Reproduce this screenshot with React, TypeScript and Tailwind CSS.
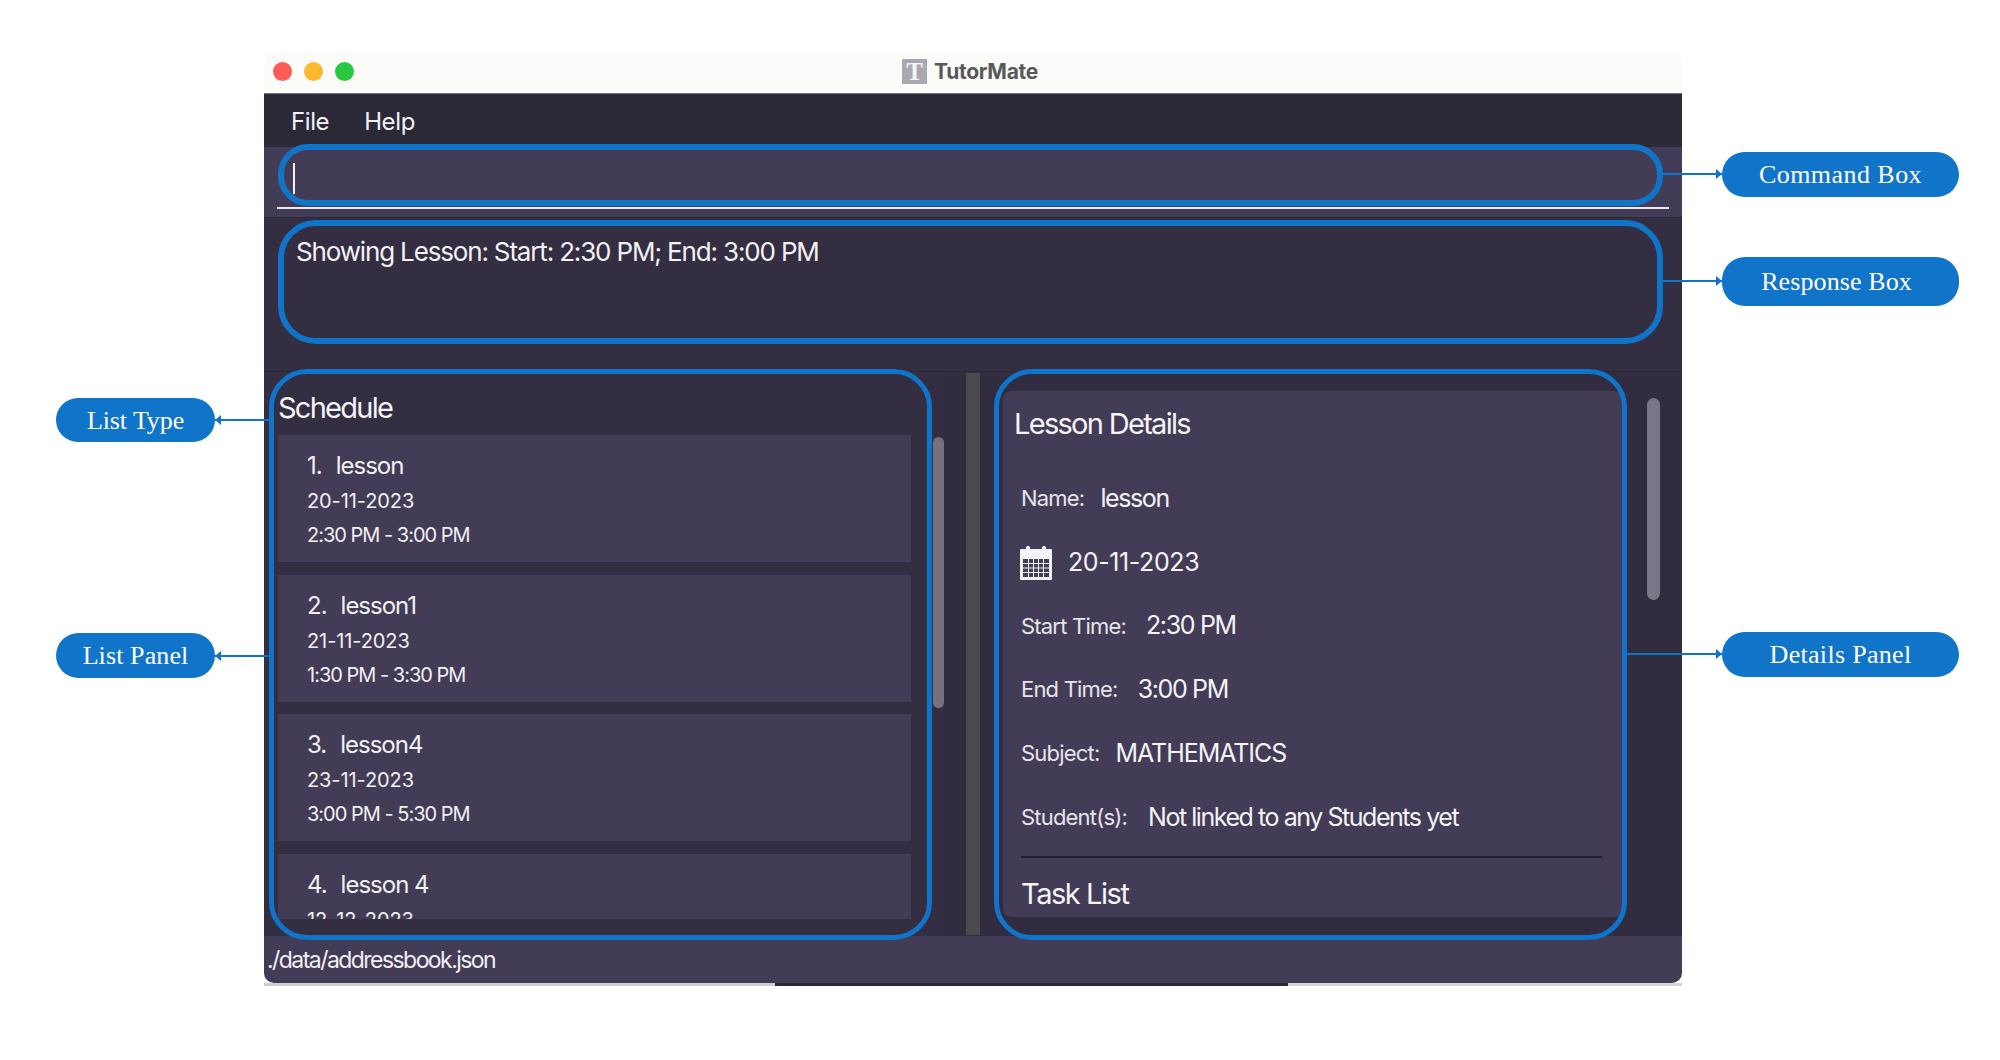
const lessons = [
  { n: "1.", name: "lesson", date: "20-11-2023", time: "2:30 PM - 3:00 PM" },
  { n: "2.", name: "lesson1", date: "21-11-2023", time: "1:30 PM - 3:30 PM" },
  { n: "3.", name: "lesson4", date: "23-11-2023", time: "3:00 PM - 5:30 PM" },
];

function Card({ n, name, date, time }: { n: string; name: string; date: string; time: string }) {
  return (
    <div className="h-[127px] shrink-0 bg-[#433c56] pl-[29px] pt-[13px] text-[#f1f0f3]">
      <div className="flex h-[36px] items-center gap-[14px] text-[24px] tracking-[-1px]">
        <span>{n}</span>
        <span>{name}</span>
      </div>
      <div className="h-[34px] text-[20px] leading-[34px] tracking-[-0.1px]">{date}</div>
      <div className="h-[34px] text-[20px] leading-[34px] tracking-[-1px]">{time}</div>
    </div>
  );
}

function Row({ label, value, gap, track }: { label: string; value: string; gap: string; track: string }) {
  return (
    <div className={`flex h-[63.7px] items-center ${gap}`}>
      <span className="text-[22px] tracking-[-0.8px] text-[#e6e4ea]">{label}</span>
      <span className={`text-[25px] text-[#f4f3f6] ${track}`}>{value}</span>
    </div>
  );
}

function CalendarIcon() {
  return (
    <svg width="32" height="34" viewBox="0 0 32 34" fill="none" className="-ml-[1px]">
      <rect x="0" y="3" width="32" height="31" rx="1" fill="#f3f2f5" />
      <rect x="6" y="0" width="4" height="6" rx="1.5" fill="#f3f2f5" />
      <rect x="22" y="0" width="4" height="6" rx="1.5" fill="#f3f2f5" />
      <g fill="#433c56">
        <rect x="3" y="13" width="26" height="18" />
      </g>
      <g fill="#f3f2f5">
        <rect x="8" y="13" width="1" height="18" />
        <rect x="13" y="13" width="1" height="18" />
        <rect x="18" y="13" width="1" height="18" />
        <rect x="23" y="13" width="1" height="18" />
        <rect x="3" y="17" width="26" height="1" />
        <rect x="3" y="21.5" width="26" height="1" />
        <rect x="3" y="26" width="26" height="1" />
      </g>
    </svg>
  );
}

function Arrow({ className, left }: { className: string; left?: boolean }) {
  return (
    <div className={`absolute h-[2px] bg-[#1074c9] ${className}`}>
      <div
        className={
          left
            ? "absolute left-0 top-[-4px] h-0 w-0 border-y-[5px] border-r-[6px] border-y-transparent border-r-[#1074c9]"
            : "absolute right-0 top-[-4px] h-0 w-0 border-y-[5px] border-l-[6px] border-y-transparent border-l-[#1074c9]"
        }
      />
    </div>
  );
}

function Callout({ className, children }: { className: string; children: string }) {
  return (
    <div
      className={`absolute flex items-center justify-center rounded-[23px] bg-[#1074c9] font-['Liberation_Serif',serif] text-[26px] text-white ${className}`}
    >
      {children}
    </div>
  );
}

export default function App() {
  return (
    <div className="relative h-[1060px] w-[2000px] overflow-hidden bg-white pl-[264px] pt-[52px] font-['Inter',sans-serif]">
      <div className="w-[1418px]">
        <div className="overflow-hidden rounded-b-[10px] rounded-t-[10px]">
          {/* Title bar */}
          <div className="relative flex h-[42px] items-center justify-center border-b border-b-[#77757a] bg-[#fbfcf9] pb-[2px]">
            <div className="absolute left-[9px] top-[10px] flex gap-[12px]">
              <div className="h-[19px] w-[19px] rounded-full bg-[#fc5b57]" />
              <div className="h-[19px] w-[19px] rounded-full bg-[#fdb92e]" />
              <div className="h-[19px] w-[19px] rounded-full bg-[#28c940]" />
            </div>
            <div className="flex items-center gap-[7px] pr-[6px]">
              <div className="flex h-[25px] w-[25px] items-center justify-center bg-[#a9a8af] font-['Liberation_Serif',serif] text-[25px] font-bold leading-none text-[#f4f4f6]">
                T
              </div>
              <span className="text-[21px] font-bold tracking-[-0.3px] text-[#58585a]">TutorMate</span>
            </div>
          </div>

          {/* Menu */}
          <div className="flex h-[53px] items-center gap-[35px] bg-[#2b2838] pl-[27px] pt-[3px] text-[24px] tracking-[-0.4px] text-[#f3f2f5]">
            <span>File</span>
            <span>Help</span>
          </div>

          {/* Command box */}
          <div className="h-[70px] bg-[#433c56] pl-[12.5px] pr-[13px]">
            <div className="flex h-[62px] items-end border-b-2 border-b-[#ece9ee] pb-[13px] pl-[16px]">
              <div className="h-[31px] w-[2px] bg-[#f0eff2]" />
            </div>
          </div>

          {/* Response */}
          <div className="h-[155px] border-y border-y-[#2b2838] bg-[#332e42] pl-[32px] pt-[15.5px] text-[26px] leading-[36px] tracking-[-1.16px] text-[#f3f2f5]">
            Showing Lesson: Start: 2:30 PM; End: 3:00 PM
          </div>

          {/* Panels */}
          <div className="flex h-[564px] bg-[#312c40]">
            <div className="flex w-[680px] shrink-0 bg-[#332e42] pl-[14px]">
              <div className="w-[633px] shrink-0">
                <div className="flex h-[63px] items-end pb-[7px] text-[29px] leading-[40px] tracking-[-1.75px] text-[#f5f4f7]">
                  Schedule
                </div>
                <div className="flex h-[484px] flex-col gap-[12.7px] overflow-hidden">
                  {lessons.map((l) => (
                    <Card key={l.n} {...l} />
                  ))}
                  <Card n="4." name="lesson 4" date="12-12-2023" time="" />
                </div>
              </div>
              <div className="ml-[22px] mt-[65px] h-[271px] w-[11px] rounded-full bg-[#75717f]" />
            </div>
            <div className="ml-[22px] mt-[1px] h-[562px] w-[14px] bg-[#4a4a4c]" />
            <div className="ml-[23px] mt-[19px] h-[526px] w-[619px] shrink-0 rounded-[8px] bg-[#433c56] px-[18px]">
              <div className="-ml-[7px] flex h-[66px] items-center text-[29px] tracking-[-1.7px] text-[#f5f4f7]">
                Lesson Details
              </div>
              <div className="mt-[10px]">
                <Row label="Name:" value="lesson" gap="gap-[16px]" track="tracking-[-1.4px]" />
                <div className="flex h-[63.7px] items-center gap-[16px]">
                  <CalendarIcon />
                  <span className="text-[25px] tracking-[-0.4px] text-[#f4f3f6]">20-11-2023</span>
                </div>
                <Row label="Start Time:" value="2:30 PM" gap="gap-[20px]" track="tracking-[-1.35px]" />
                <Row label="End Time:" value="3:00 PM" gap="gap-[20px]" track="tracking-[-1.35px]" />
                <Row label="Subject:" value="MATHEMATICS" gap="gap-[16px]" track="tracking-[-1.05px]" />
                <Row label="Student(s):" value="Not linked to any Students yet" gap="gap-[21px]" track="tracking-[-1.45px]" />
              </div>
              <div className="mt-[7px] h-[2px] w-[581px] bg-[#231f33]" />
              <div className="pt-[16px] text-[29px] leading-[40px] tracking-[-1.45px] text-[#f5f4f7]">Task List</div>
            </div>
            <div className="ml-[25px] mt-[26px] h-[202px] w-[13px] rounded-full bg-[#7a7686]" />
          </div>

          {/* Status */}
          <div className="h-[47px] bg-[#433c56] pl-[3px] pt-[7px] text-[23px] leading-[34px] tracking-[-1.55px] text-[#f1f0f3]">
            ./data/addressbook.json
          </div>
        </div>
        <div className="flex h-[3px]">
          <div className="w-[511px] bg-[#cfcfd1]" />
          <div className="w-[513px] bg-[#2b2838]" />
          <div className="flex-1 bg-[#d6d6d8]" />
        </div>
      </div>

      {/* Annotation rings */}
      <div className="pointer-events-none absolute left-[278px] top-[144px] h-[62px] w-[1385px] rounded-[30px] border-[6px] border-[#1074c9]" />
      <div className="pointer-events-none absolute left-[278px] top-[220px] h-[124px] w-[1385px] rounded-[38px] border-[6px] border-[#1074c9]" />
      <div className="pointer-events-none absolute left-[269px] top-[369px] h-[571px] w-[663px] rounded-[38px] border-[5px] border-[#1074c9]" />
      <div className="pointer-events-none absolute left-[994px] top-[369px] h-[571px] w-[633px] rounded-[38px] border-[5px] border-[#1074c9]" />

      {/* Callouts */}
      <Arrow className="left-[1663px] top-[173px] w-[59px]" />
      <Arrow className="left-[1663px] top-[280px] w-[59px]" />
      <Arrow className="left-[1627px] top-[653px] w-[95px]" />
      <Arrow left className="left-[215px] top-[419px] w-[54px]" />
      <Arrow left className="left-[215px] top-[655px] w-[54px]" />
      <Callout className="left-[1722px] top-[152px] h-[45px] w-[237px] tracking-[0.45px]">Command Box</Callout>
      <Callout className="left-[1722px] top-[257px] h-[49px] w-[237px] pr-[8px] tracking-[0.1px]">Response Box</Callout>
      <Callout className="left-[1722px] top-[632px] h-[45px] w-[237px] tracking-[0.3px]">Details Panel</Callout>
      <Callout className="left-[56px] top-[398px] h-[44px] w-[159px] tracking-[-0.1px]">List Type</Callout>
      <Callout className="left-[56px] top-[633px] h-[45px] w-[159px] tracking-[0.1px]">List Panel</Callout>
    </div>
  );
}
